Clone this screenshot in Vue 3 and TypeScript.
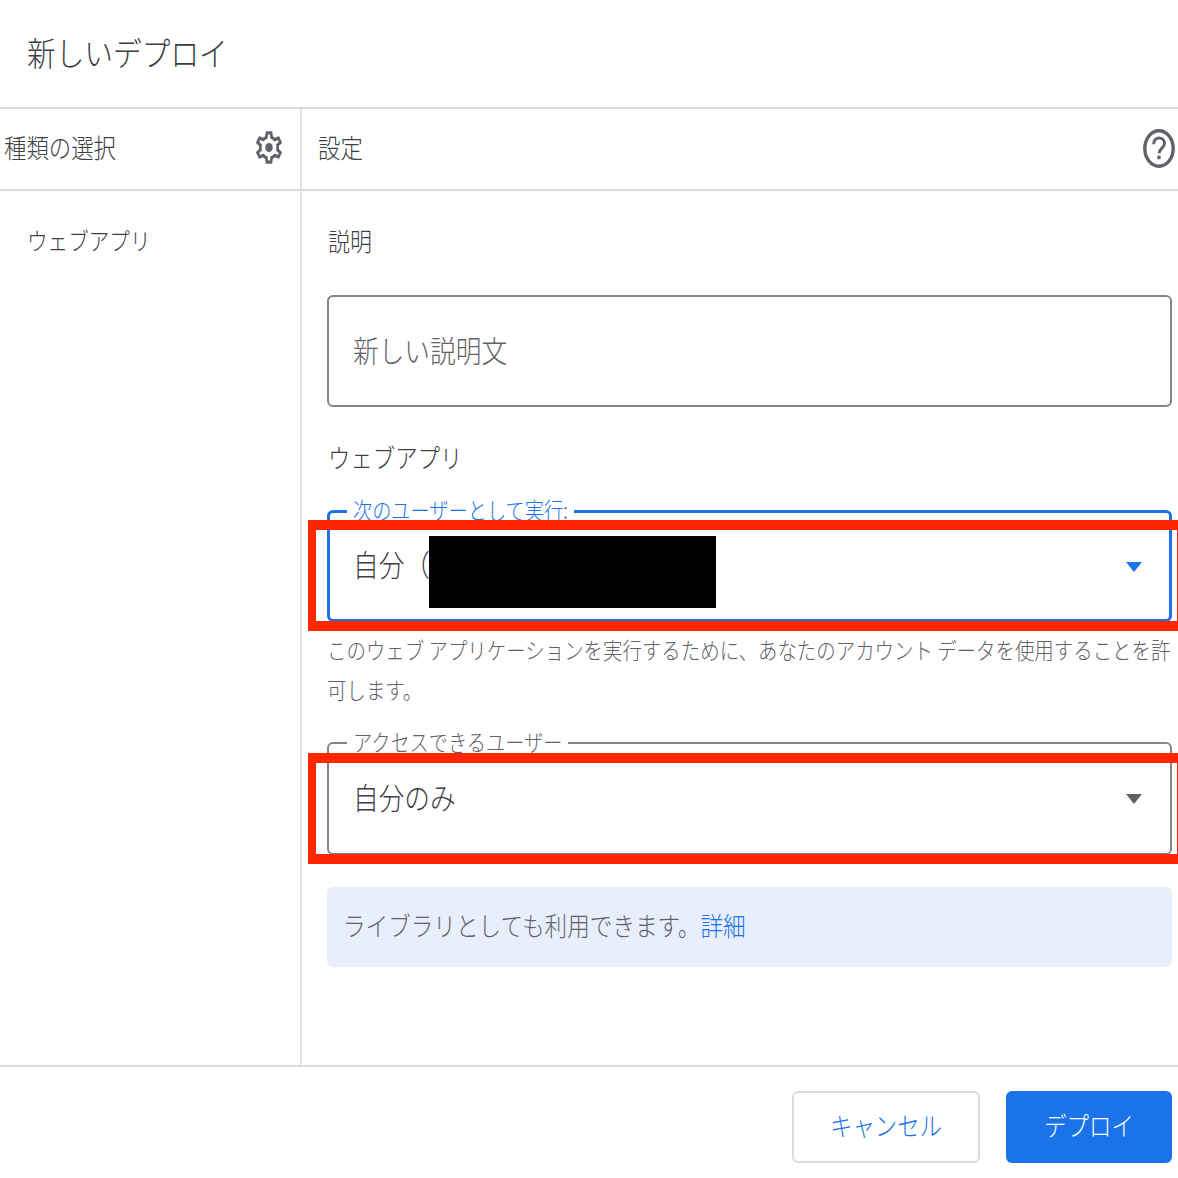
<script setup lang="ts">
const hint = 'このウェブ アプリケーションを実行するために、あなたのアカウント データを使用することを許可します。'
</script>

<template>
  <div class="dialog">
    <header class="title"><span class="tx">新しいデプロイ</span></header>
    <div class="subhead">
      <div class="subhead-left">
        <span class="tx">種類の選択</span>
        <svg class="gear" viewBox="0 0 24 24" preserveAspectRatio="none" aria-hidden="true">
          <path d="M19.43 12.98c.04-.32.07-.64.07-.98s-.03-.66-.07-.98l2.11-1.65a.5.5 0 0 0 .12-.64l-2-3.46a.5.5 0 0 0-.61-.22l-2.49 1a7.3 7.3 0 0 0-1.69-.98l-.38-2.65A.49.49 0 0 0 14 2h-4a.49.49 0 0 0-.49.42l-.38 2.65c-.61.25-1.17.59-1.69.98l-2.49-1a.57.57 0 0 0-.18-.03.5.5 0 0 0-.43.25l-2 3.46a.49.49 0 0 0 .12.64l2.11 1.65c-.04.32-.07.65-.07.98s.03.66.07.98l-2.11 1.65a.5.5 0 0 0-.12.64l2 3.46a.5.5 0 0 0 .61.22l2.49-1c.52.4 1.08.73 1.69.98l.38 2.65c.03.24.24.42.49.42h4c.25 0 .46-.18.49-.42l.38-2.65c.61-.25 1.17-.59 1.69-.98l2.49 1c.06.02.12.03.18.03a.5.5 0 0 0 .43-.25l2-3.46a.5.5 0 0 0-.12-.64zm-1.98-1.71c.04.31.05.52.05.73s-.02.43-.05.73l-.14 1.13.89.7 1.08.84-.7 1.21-1.27-.51-1.04-.42-.9.68c-.43.32-.84.56-1.25.73l-1.06.43-.16 1.13-.2 1.35h-1.4l-.19-1.35-.16-1.13-1.06-.43a5.7 5.7 0 0 1-1.23-.71l-.91-.7-1.06.43-1.27.51-.7-1.21 1.08-.84.89-.7-.14-1.13a8 8 0 0 1-.05-.74c0-.2.02-.43.05-.73l.14-1.13-.89-.7-1.08-.84.7-1.21 1.27.51 1.04.42.9-.68c.43-.32.84-.56 1.25-.73l1.06-.43.16-1.13.2-1.35h1.39l.19 1.35.16 1.13 1.06.43c.43.18.83.41 1.23.71l.91.7 1.06-.43 1.27-.51.7 1.21-1.07.85-.89.7.14 1.13z" />
          <circle cx="12" cy="12" r="2.8" />
        </svg>
      </div>
      <div class="subhead-right">
        <span class="tx">設定</span>
        <svg class="help" viewBox="0 0 32 39" preserveAspectRatio="none" aria-hidden="true">
          <ellipse cx="16" cy="19.5" rx="14.2" ry="17.7" fill="none" stroke="#5f6368" stroke-width="3.4" />
          <path d="M10.6 15.2c0-3.6 2.3-6.2 5.5-6.2 3.1 0 5.4 2.3 5.4 5.4 0 4.4-5.4 5-5.4 9.8" fill="none" stroke="#5f6368" stroke-width="3" />
          <rect x="14.4" y="26.6" width="3.2" height="3.6" fill="#5f6368" />
        </svg>
      </div>
    </div>

    <div class="body">
      <aside class="side">
        <div class="side-item"><span class="tx">ウェブアプリ</span></div>
      </aside>
      <main class="content">
        <div class="label"><span class="tx">説明</span></div>
        <div class="input"><span class="tx">新しい説明文</span></div>
        <div class="label section"><span class="tx near">ウェブアプリ</span></div>

        <fieldset class="field active">
          <legend><span class="tx near">次のユーザーとして実行:</span></legend>
          <div class="field-row">
            <span class="tx">自分（</span>
            <i class="caret"></i>
          </div>
        </fieldset>
        <p class="hint"><span class="hint-text">{{ hint }}</span></p>

        <fieldset class="field second">
          <legend><span class="tx near">アクセスできるユーザー</span></legend>
          <div class="field-row">
            <span class="tx">自分のみ</span>
            <i class="caret"></i>
          </div>
        </fieldset>

        <div class="info"><span class="tx">ライブラリとしても利用できます。<a>詳細</a></span></div>
      </main>
    </div>

    <footer class="footer">
      <button class="btn cancel" type="button"><span class="tx">キャンセル</span></button>
      <button class="btn deploy" type="button"><span class="tx">デプロイ</span></button>
    </footer>

    <div class="redact"></div>
    <div class="mark mark-one"></div>
    <div class="mark mark-two"></div>
  </div>
</template>

<style>
html, body { margin: 0; background: #fff; }
</style>

<style scoped>
.dialog {
  position: relative;
  width: 1178px;
  height: 1178px;
  overflow: hidden;
  display: flex;
  flex-direction: column;
  background: #fff;
  color: #3c4043;
  font-family: "Noto Sans CJK JP", "Noto Sans", sans-serif;
  font-weight: 300;
}
/* The reference is stretched vertically; its glyphs stand taller than they are wide. */
.tx {
  display: inline-block;
  transform: translateY(-2.5px) scaleY(1.16);
}
.tx.near {
  transform: translateY(-1px) scaleY(1.16);
}
.title {
  height: 107px;
  flex: none;
  box-sizing: content-box;
  padding-left: 27px;
  display: flex;
  align-items: center;
  font-size: 28.7px;
  border-bottom: 2px solid #dcdce0;
}
.subhead {
  flex: none;
  height: 80px;
  display: flex;
  font-size: 22.4px;
  border-bottom: 2px solid #dcdce0;
}
.subhead-left {
  width: 300px;
  box-sizing: border-box;
  padding: 0 20px 0 4px;
  display: flex;
  align-items: center;
  justify-content: space-between;
}
.subhead-right {
  flex: 1;
  padding: 0 3px 0 16px;
  display: flex;
  align-items: center;
  justify-content: space-between;
  border-left: 2px solid #e0e2e5;
}
.gear {
  width: 32px;
  height: 39px;
  margin: -3px -5px 0 0;
  fill: #5f6368;
}
.help {
  width: 32px;
  height: 39px;
  margin-top: -2px;
}
.body {
  flex: 1;
  display: flex;
  min-height: 0;
}
.side {
  width: 300px;
  flex: none;
  padding: 36px 0 0 27px;
  box-sizing: border-box;
  font-size: 20.6px;
  line-height: 30px;
}
.content {
  flex: 1;
  border-left: 2px solid #e0e2e5;
  padding: 36px 6px 0 25px;
  min-width: 0;
}
.label {
  padding-left: 1px;
  font-size: 22px;
  line-height: 30px;
}
.section {
  margin-top: 35px;
  font-size: 22.4px;
}
.input {
  margin-top: 38px;
  height: 112px;
  box-sizing: border-box;
  border: 2px solid #80868b;
  border-radius: 6px;
  padding-left: 24px;
  display: flex;
  align-items: center;
  font-size: 25.7px;
  color: #5f6368;
}
.field {
  margin: 27px 0 0;
  padding: 0 28px 11px 0;
  box-sizing: border-box;
  height: 123px;
  min-width: 0;
  border: 2px solid #80868b;
  border-radius: 6px;
}
.field legend {
  margin-left: 18px;
  padding: 0 6px;
  font-size: 19.2px;
  line-height: 24px;
  color: #5f6368;
}
.field.active {
  border: 3px solid #1a73e8;
  padding-right: 27px;
}
.field.active legend {
  margin-left: 17px;
  color: #1a73e8;
}
.field.second {
  margin-top: 21px;
  height: 124px;
  padding-bottom: 12px;
  border-color: #80868b;
}
.field-row {
  height: 100%;
  padding-left: 24px;
  display: flex;
  align-items: center;
  justify-content: space-between;
  font-size: 25.7px;
}
.active .field-row {
  padding-left: 23px;
}
.caret {
  width: 0;
  height: 0;
  margin-top: 2px;
  border-left: 8px solid transparent;
  border-right: 8px solid transparent;
  border-top: 10px solid #5f6368;
}
.active .caret {
  border-top-color: #1a73e8;
}
.hint {
  margin: 8px 0 0;
  height: 80px;
  display: flex;
  align-items: center;
  font-size: 19.45px;
  color: #5f6368;
}
.hint-text {
  display: block;
  width: 100%;
  line-height: 34.48px;
  transform: scaleY(1.16);
}
.info {
  margin-top: 32px;
  height: 80px;
  box-sizing: border-box;
  padding-left: 16px;
  display: flex;
  align-items: center;
  background: #e8eefb;
  border-radius: 6px;
  font-size: 22.6px;
  color: #5f6368;
}
.info a {
  color: #1a73e8;
}
.footer {
  flex: none;
  height: 111px;
  box-sizing: content-box;
  border-top: 2px solid #dcdce0;
  display: flex;
  justify-content: flex-end;
  align-items: flex-start;
  gap: 26px;
  padding-right: 6px;
}
.btn {
  margin-top: 24px;
  height: 72px;
  border-radius: 6px;
  font-family: inherit;
  font-weight: 300;
  font-size: 22.4px;
  padding: 0;
}
.cancel {
  width: 188px;
  background: #fff;
  border: 2px solid #dcdce0;
  color: #1a73e8;
}
.deploy {
  width: 166px;
  background: #1a73e8;
  border: 0;
  color: #fff;
}
.redact {
  position: absolute;
  left: 429px;
  top: 536px;
  width: 287px;
  height: 72px;
  background: #000;
}
.mark {
  position: absolute;
  left: 308px;
  width: 870px;
  height: 111px;
  box-sizing: border-box;
  border-style: solid;
  border-color: #ff2600;
  border-width: 10px 1px 10px 8px;
}
.mark-one {
  top: 520px;
}
.mark-two {
  top: 753px;
}
</style>
